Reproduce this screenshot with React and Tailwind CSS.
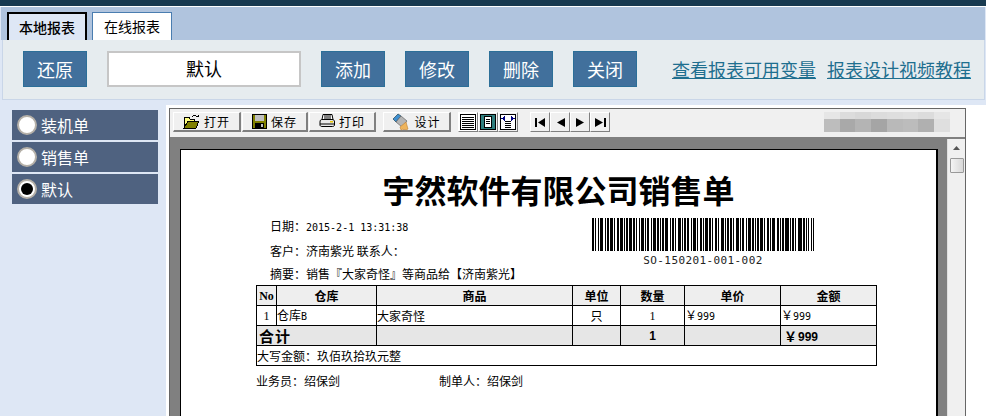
import React from 'react'

const cjk = { fontFamily: '"Noto Sans CJK SC", "Liberation Sans", sans-serif' }

const barRuns = [
  2,1,1,2,1,1,3,2,1,1,2,1,3,1,1,2,2,1,3,1,1,1,2,1,3,1,2,1,1,2,1,1,3,1,1,1,2,2,1,1,3,1,2,1,1,1,2,1,3,2,1,1,2,1,1,2,3,1,1,1,2,1,2,2,1,1,3,1,1,2,2,1,1,1,3,1,2,1,1,2,
  2,1,1,2,3,1,1,1,2,1,2,1,1,2,3,1,1,1,2,2,1,1,3,1,2,1,1,1,2,1,3,1,1,2,2,1,1,1,3,2,2,1,1,1,2,1,4,1,1,1,2,1,1,2,4,1,2,1,1,1,1,2,1,1,1,
]

const Barcode = () => {
  let x = 0
  const rects = []
  barRuns.forEach((w, i) => {
    if (i % 2 === 0) rects.push(<rect key={i} x={x} y="0" width={w} height="33" fill="#000" />)
    x += w
  })
  return (
    <svg width="222" height="33" viewBox="0 0 222 33" shapeRendering="crispEdges" className="block">
      {rects}
    </svg>
  )
}

const OpenIcon = () => (
  <svg width="17" height="16" viewBox="0 0 17 16" shapeRendering="crispEdges">
    <path d="M1 3h5l1 2h4v2H5L2 13H1z" fill="#ffff80" stroke="#000" strokeWidth="1" />
    <path d="M5 7h11l-3 7H1z" fill="#808000" stroke="#000" strokeWidth="1" />
    <path d="M9 3c1-2 4-2 5 0" fill="none" stroke="#000" />
    <path d="M12 3h4v-2z" fill="#000" />
  </svg>
)

const SaveIcon = () => (
  <svg width="15" height="15" viewBox="0 0 15 15" shapeRendering="crispEdges">
    <rect x="0.5" y="0.5" width="14" height="14" fill="#808000" stroke="#000" />
    <rect x="3" y="1" width="9" height="6" fill="#c0c0c0" />
    <rect x="3" y="9" width="9" height="5" fill="#000" />
    <rect x="9" y="10" width="2" height="3" fill="#c0c0c0" />
  </svg>
)

const PrintIcon = () => (
  <svg width="16" height="15" viewBox="0 0 16 15">
    <path d="M4 .5h9l1 5H3z" fill="#fff" stroke="#000" />
    <path d="M5 2h7M5 4h7" stroke="#000" />
    <path d="M1 8c0-2 1-2.500 2-2.500h10c2 0 2.500 1 2.500 2.500v3c0 1-1 1.500-2 1.500H3c-1 0-2-.5-2-1.500z" fill="#e8e8e8" stroke="#000" />
    <rect x="11" y="7" width="3" height="1.500" fill="#e8c800" />
    <path d="M1 10h14" stroke="#000" />
  </svg>
)

const DesignIcon = () => (
  <svg width="18" height="18" viewBox="0 0 18 18">
    <path d="M1 6l5-5 3 2-5 6z" fill="#3f8fd0" stroke="#245" strokeWidth=".7" />
    <path d="M4 9l5-6 6 5-5 6z" fill="#b5b5b5" stroke="#666" strokeWidth=".7" />
    <path d="M8 14l6-5 2 7-2 1-1-1-1 1-1-1-2 1z" fill="#eeb45c" stroke="#c08030" strokeWidth=".6" />
  </svg>
)

const ToolButton = ({ icon, label, className }) => (
  <button className={`h-5 flex items-center justify-center gap-1 bg-[#f0f0f0] border-t border-l border-t-white border-l-white border-r-2 border-b-2 border-r-[#808080] border-b-[#808080] text-[12px] text-black leading-none ${className}`}>
    {icon}
    <span className="tracking-[1px]">{label}</span>
  </button>
)

const IconButton = ({ children, active }) => (
  <button className={`h-5 w-5 flex items-center justify-center border-t border-l border-t-white border-l-white border-r border-b border-r-[#808080] border-b-[#808080] ${active ? 'bg-white' : 'bg-[#f0f0f0]'}`}>
    {children}
  </button>
)

const ActionButton = ({ label, className }) => (
  <button className={`w-16 h-9 bg-[#41709c] border border-[#2c6f98] text-white text-[18px] leading-none ${className}`}>
    {label}
  </button>
)

const SideItem = ({ label, checked }) => (
  <div className="h-[30px] bg-[#4f6280] flex items-center pl-[5px] gap-1 text-white text-[16px]">
    <span className="w-5 h-5 rounded-full bg-white border-2 border-[#b5b0a8] flex items-center justify-center shrink-0">
      {checked && <span className="w-3 h-3 rounded-full bg-black" />}
    </span>
    <span>{label}</span>
  </div>
)

const blurTop = ['#f0f0f0', '#e6e6e6', '#dcdcdc', '#d8d8d8', '#dcdcdc', '#dedede', '#e0e0e0', '#dcdcdc', '#e6e6e6']
const blurBottom = ['#f0f0f0', '#bdbdbd', '#a9a9a9', '#b4b4b4', '#a5a5a5', '#b9b9b9', '#bcbcbc', '#b0b0b0', '#dfdfdf']

const Mixed = ({ children }) => (
  <span className="font-['DejaVu_Sans_Mono'] text-[10px]">{children}</span>
)

const th = 'border border-black bg-[#eeeeee] font-bold text-center p-0 text-[12px]'
const td = 'border border-black p-0 text-[12px]'
const tot = 'border border-black bg-[#e6e6e6] p-0 font-bold'

const App = () => {
  return (
    <div className="w-[986px] h-[416px] overflow-hidden flex flex-col bg-[#dee7f5] text-black" style={cjk}>
      <div className="h-1.5 bg-[#183a50] shrink-0" />
      <div className="h-px bg-white shrink-0" />

      <div className="h-[33px] shrink-0 mx-px bg-[#b0c4de] flex items-end pl-1.5 gap-[5px]">
        <div className="w-20 h-7 bg-[#dee7f5] border-2 border-b-0 border-black flex items-center justify-center text-[14px] font-medium">本地报表</div>
        <div className="w-20 h-7 bg-white border border-b-0 border-[#4a7db0] flex items-center justify-center text-[14px]">在线报表</div>
      </div>

      <div className="h-[60px] shrink-0 ml-0.5 mr-px bg-[#e6ecef] border border-t-0 border-[#c9d6e8] flex items-center pl-5 pb-0.5">
        <ActionButton label="还原" />
        <div className="ml-5 w-[194px] h-9 bg-white border-2 border-[#c6c6c6] flex items-center justify-center text-[18px]">默认</div>
        <ActionButton label="添加" className="ml-5" />
        <ActionButton label="修改" className="ml-5" />
        <ActionButton label="删除" className="ml-5" />
        <ActionButton label="关闭" className="ml-5" />
        <a className="ml-[35px] text-[18px] text-[#1f6f8f] underline leading-none whitespace-nowrap">查看报表可用变量</a>
        <a className="ml-[11px] text-[18px] text-[#1f6f8f] underline leading-none whitespace-nowrap">报表设计视频教程</a>
      </div>

      <div className="flex-1 flex min-h-0">
        <div className="w-[166px] shrink-0 pt-2.5 pl-3 pr-2 flex flex-col gap-0.5">
          <SideItem label="装机单" />
          <SideItem label="销售单" />
          <SideItem label="默认" checked />
        </div>

        <div className="flex-1 mt-[5px] bg-white pl-[3px] pr-5 pt-[3px] min-w-0">
          <div className="h-[400px] border border-[#666666] flex flex-col">
            <div className="h-[30px] shrink-0 bg-[#f0f0f0] flex items-center pl-[3px] pb-0.5 relative border-b-2 border-[#808080]">
              <ToolButton icon={<OpenIcon />} label="打开" className="w-[68px]" />
              <ToolButton icon={<SaveIcon />} label="保存" className="w-[66px] ml-px" />
              <ToolButton icon={<PrintIcon />} label="打印" className="w-[67px] ml-px" />
              <ToolButton icon={<DesignIcon />} label="设计" className="w-[68px] ml-[7px]" />
              <div className="flex ml-[7px]">
                <IconButton active>
                  <svg width="16" height="16" viewBox="0 0 16 16" shapeRendering="crispEdges">
                    <rect x=".5" y=".5" width="15" height="15" fill="#fff" stroke="#000" />
                    <path d="M2 3.500h12M2 5.500h12M2 7.500h12M2 9.500h12M2 11.500h12M2 13.500h12" stroke="#000" />
                  </svg>
                </IconButton>
                <IconButton>
                  <svg width="16" height="16" viewBox="0 0 16 16" shapeRendering="crispEdges">
                    <rect x=".5" y=".5" width="15" height="15" fill="#2f7f7f" stroke="#000" />
                    <rect x="4.500" y="2.500" width="7" height="11" fill="#fff" stroke="#000" />
                    <path d="M6 5.500h4M6 7.500h4M6 9.500h4" stroke="#000" />
                  </svg>
                </IconButton>
                <IconButton>
                  <svg width="16" height="16" viewBox="0 0 16 16" shapeRendering="crispEdges">
                    <rect x=".5" y=".5" width="15" height="15" fill="#fff" stroke="#000" />
                    <path d="M5 7.500h6M5 9.500h6M5 11.500h6M5 13.500h6" stroke="#000" />
                    <path d="M1 4.500h4M11 4.500h4" stroke="#000080" />
                    <path d="M5 2v5l-3-2.500zM11 2v5l3-2.500z" fill="#000080" />
                  </svg>
                </IconButton>
              </div>
              <div className="flex ml-3">
                <IconButton>
                  <svg width="11" height="9" viewBox="0 0 11 9"><path d="M0 0h2v9H0zM10 0v9L3 4.500z" fill="#000" /></svg>
                </IconButton>
                <IconButton>
                  <svg width="9" height="9" viewBox="0 0 9 9"><path d="M9 0v9L1 4.500z" fill="#000" /></svg>
                </IconButton>
                <IconButton>
                  <svg width="9" height="9" viewBox="0 0 9 9"><path d="M0 0v9l8-4.500z" fill="#000" /></svg>
                </IconButton>
                <IconButton>
                  <svg width="11" height="9" viewBox="0 0 11 9"><path d="M9 0h2v9H9zM0 0v9l8-4.500z" fill="#000" /></svg>
                </IconButton>
              </div>
              <div className="ml-auto mr-[15px] w-[142px] flex flex-col">
                <div className="flex h-[7px]">
                  {blurTop.map((c, j) => (
                    <div key={j} className="flex-1" style={{ backgroundColor: c }} />
                  ))}
                </div>
                <div className="flex h-[13px]">
                  {blurBottom.map((c, j) => (
                    <div key={j} className="flex-1" style={{ backgroundColor: c }} />
                  ))}
                </div>
              </div>
            </div>

            <div className="flex-1 flex min-h-0">
              <div className="flex-1 bg-[#808080] pl-[9px] pr-[9px] pt-2.5 min-w-0 border-l border-[#808080]">
                <div className="h-full bg-white border-2 border-black border-b-0 border-l border-t pl-[75px]">
                  <div className="pt-[17px] h-[58px] -ml-[75px] text-center text-[32px] font-bold leading-[44px] whitespace-nowrap">宇然软件有限公司销售单</div>

                  <div className="flex h-[77px] text-[12px] leading-none">
                    <div className="w-[336px] pl-3.5 pt-3 flex flex-col">
                      <div className="h-[25px] shrink-0">日期：<Mixed>2015-2-1 13:31:38</Mixed></div>
                      <div className="h-[23px] shrink-0">客户：济南紫光 联系人：</div>
                      <div className="whitespace-nowrap">摘要：销售『大家奇怪』等商品给【济南紫光】</div>
                    </div>
                    <div className="pt-2.5 w-[222px] shrink-0">
                      <Barcode />
                      <div className="font-['DejaVu_Sans_Mono'] text-[11px] leading-none text-center tracking-[0.4px] mt-1 text-[#222]">SO-150201-001-002</div>
                    </div>
                  </div>

                  <table className="w-[621px] table-fixed border-collapse border border-black leading-none">
                    <colgroup>
                      <col className="w-5" />
                      <col className="w-[100px]" />
                      <col className="w-[196px]" />
                      <col className="w-12" />
                      <col className="w-16" />
                      <col className="w-24" />
                      <col />
                    </colgroup>
                    <tbody>
                      <tr className="h-5">
                        <th className={`${th} font-['Liberation_Serif'] text-[10px]`}>No</th>
                        <th className={th}>仓库</th>
                        <th className={th}>商品</th>
                        <th className={th}>单位</th>
                        <th className={th}>数量</th>
                        <th className={th}>单价</th>
                        <th className={th}>金额</th>
                      </tr>
                      <tr className="h-5">
                        <td className={`${td} text-center font-['Liberation_Serif']`}>1</td>
                        <td className={td}>仓库<Mixed>B</Mixed></td>
                        <td className={td}>大家奇怪</td>
                        <td className={`${td} text-center`}>只</td>
                        <td className={`${td} text-center font-['Liberation_Serif']`}>1</td>
                        <td className={td}>￥<Mixed>999</Mixed></td>
                        <td className={td}>￥<Mixed>999</Mixed></td>
                      </tr>
                      <tr className="h-5">
                        <td colSpan={2} className={`${tot} text-[15px] tracking-[1px] pl-0.5`}>合计</td>
                        <td className={tot} />
                        <td className={tot} />
                        <td className={`${tot} text-center text-[12px] font-['Liberation_Sans']`}>1</td>
                        <td className={tot} />
                        <td className={`${tot} text-[13px] pl-[3px]`}>￥<span className="font-['Liberation_Sans'] text-[12px] ml-px">999</span></td>
                      </tr>
                      <tr className="h-5">
                        <td colSpan={7} className={td}>大写金额：玖佰玖拾玖元整</td>
                      </tr>
                    </tbody>
                  </table>

                  <div className="flex mt-[9px] text-[12px] leading-none">
                    <div className="w-[183px]">业务员：绍保剑</div>
                    <div>制单人：绍保剑</div>
                  </div>
                </div>
              </div>

              <div className="w-[18px] shrink-0 bg-[#f0f0f0] flex flex-col items-center border-l border-[#e0e0e0]">
                <svg width="7" height="4" viewBox="0 0 7 4" className="mt-[7px]"><path d="M3.500 0L7 4H0z" fill="#555" /></svg>
                <div className="w-[14px] h-[15px] mt-2 bg-gradient-to-r from-[#f4f4f4] to-[#d8d8d8] border border-[#999] rounded-[1px]" />
              </div>
            </div>
          </div>
        </div>
      </div>
    </div>
  )
}

export default App
